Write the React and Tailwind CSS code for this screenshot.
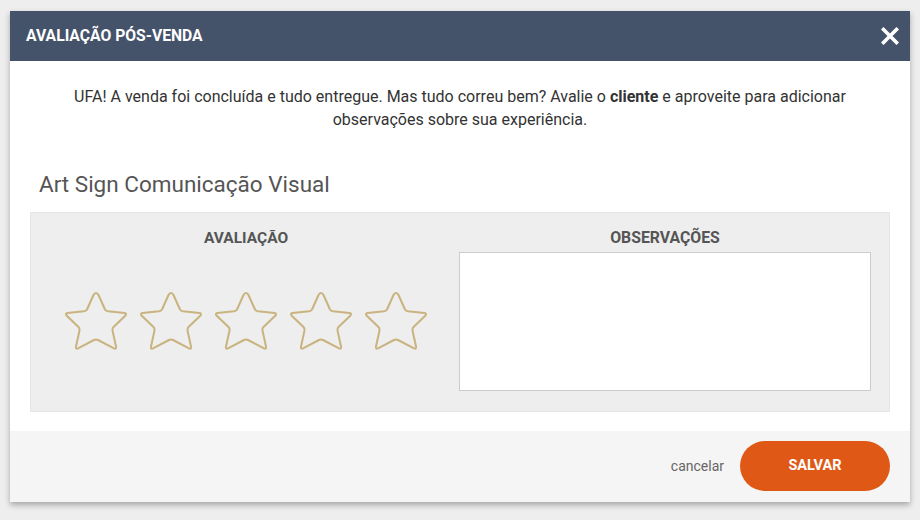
import React, { useState } from "react";

const STAR_PATH =
  "M32 2 Q33.5 2 34.5 4 L41 18.5 Q42 20 44 20.3 L60.5 22 Q63 22.5 61.5 24.5 L49.5 36 Q48 37.5 48.5 39.5 L52 55.5 Q52.5 58.5 50 57.3 L34 49 Q32 48 30 49 L14 57.3 Q11.5 58.5 12 55.5 L15.5 39.5 Q16 37.5 14.5 36 L2.5 24.5 Q1 22.5 3.5 22 L20 20.3 Q22 20 23 18.5 L29.5 4 Q30.5 2 32 2 Z";

function Star({ filled, onClick }) {
  return (
    <button type="button" onClick={onClick} className="w-[64px] h-[60px] p-0">
      <svg viewBox="0 0 64 60" width="64" height="60">
        <path
          d={STAR_PATH}
          fill={filled ? "#c9b37e" : "none"}
          stroke="#c9b37e"
          strokeWidth="2"
          strokeLinejoin="round"
        />
      </svg>
    </button>
  );
}

function App() {
  const [nota, setNota] = useState(0);
  const [obs, setObs] = useState("");

  return (
    <div className="w-[920px] h-[520px] bg-[#eeeeee] pt-[11px] pl-[10px] font-['Roboto',sans-serif]">
      <div className="w-[900px] bg-white shadow-[0_3px_6px_rgba(0,0,0,0.3)]">
        {/* Cabeçalho */}
        <div className="h-[50px] bg-[#44536a] flex items-center justify-between pl-[16px] pr-[10px]">
          <h1 className="text-white text-[15.7px] font-bold">AVALIAÇÃO PÓS-VENDA</h1>
          <button type="button" className="w-[20px] h-[20px] flex items-center justify-center">
            <svg viewBox="0 0 18 18" width="18" height="18">
              <path d="M2.5 2.5 L15.5 15.5 M15.5 2.5 L2.5 15.5" stroke="#fff" strokeWidth="3.6" strokeLinecap="square" />
            </svg>
          </button>
        </div>

        {/* Corpo */}
        <div className="px-[20px] pt-[24px] pb-[19px]">
          <p className="text-center text-[16px] leading-[23px] text-[#333] px-[10px]">
            UFA! A venda foi concluída e tudo entregue. Mas tudo correu bem? Avalie o{" "}
            <b className="font-bold">cliente</b> e aproveite para adicionar
            <br />
            observações sobre sua experiência.
          </p>

          <h2 className="mt-[39px] ml-[9px] text-[22.5px] leading-[28px] text-[#555]">
            Art Sign Comunicação Visual
          </h2>

          <div className="mt-[14px] h-[200px] bg-[#eeeeee] border border-[#e4e4e4] flex pt-[15px] pl-[9px] pr-[18px]">
            <div className="w-[412px] flex flex-col items-center">
              <span className="text-[15.5px] leading-[20px] font-bold text-[#555]">AVALIAÇÃO</span>
              <div className="mt-[43px] flex gap-[11px]">
                {[1, 2, 3, 4, 5].map((n) => (
                  <Star key={n} filled={n <= nota} onClick={() => setNota(n)} />
                ))}
              </div>
            </div>
            <div className="ml-[7px] w-[412px] flex flex-col items-center">
              <span className="text-[15.8px] leading-[20px] font-bold text-[#555]">OBSERVAÇÕES</span>
              <textarea
                value={obs}
                onChange={(e) => setObs(e.target.value)}
                className="mt-[4px] w-[412px] h-[139px] bg-white border border-[#cccccc] resize-none outline-none p-2 text-[14px]"
              />
            </div>
          </div>
        </div>

        {/* Rodapé */}
        <div className="h-[71px] bg-[#f5f5f5] flex items-start justify-end pt-[10px] pr-[20px]">
          <button type="button" className="h-[50px] mr-[16px] text-[14px] text-[#666]">
            cancelar
          </button>
          <button type="button" className="w-[150px] h-[50px] rounded-full bg-[#e05816] text-white text-[14.5px] font-bold">
            SALVAR
          </button>
        </div>
      </div>
    </div>
  );
}

export default App;
